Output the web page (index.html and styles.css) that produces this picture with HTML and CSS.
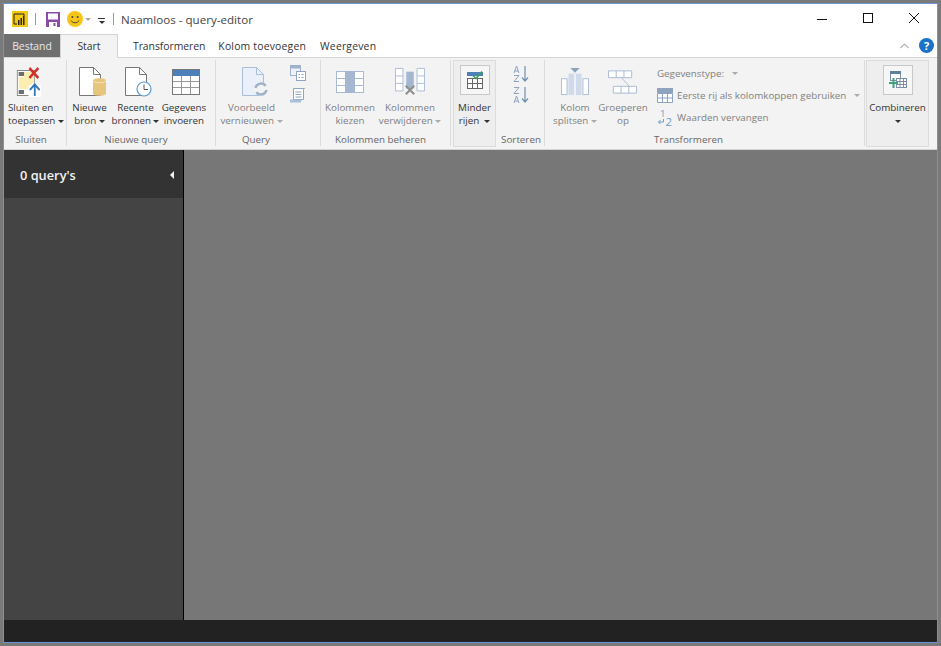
FILE: index.html
```html
<!DOCTYPE html>
<html lang="en">
<head>
  <meta charset="UTF-8">
  <title>Naamloos - query-editor</title>
  <link rel="stylesheet" href="styles.css">
</head>
<body>
  <div class="window">
    <div class="titlebar">
      <svg class="app-logo" width="16" height="16" viewBox="0 0 16 16">
        <rect width="16" height="16" fill="#f2c811"/>
        <path d="M2 3h10v2M2 3v10h3" fill="none" stroke="#222" stroke-width="1"/>
        <rect x="6" y="9" width="1.5" height="5" fill="#222"/>
        <rect x="8.5" y="7" width="1.5" height="7" fill="#222"/>
        <rect x="11" y="5" width="1.5" height="9" fill="#222"/>
      </svg>
      <span class="qat-sep"></span>
      <svg class="qat-save" width="14" height="15" viewBox="0 0 14 15">
        <rect width="14" height="15" fill="#8b4aa5"/>
        <rect x="2" y="1.500" width="10" height="6" fill="#fff"/>
        <rect x="3" y="10" width="8" height="5" fill="#fff"/>
        <rect x="7.500" y="11" width="2" height="3" fill="#8b4aa5"/>
      </svg>
      <svg class="qat-smile" width="16" height="16" viewBox="0 0 16 16">
        <circle cx="8" cy="8" r="8" fill="#f5c518"/>
        <circle cx="5.400" cy="6" r="1" fill="#444"/>
        <circle cx="10.600" cy="6" r="1" fill="#444"/>
        <path d="M4 9.500c1.500 3 6.500 3 8 0" fill="none" stroke="#444"/>
      </svg>
      <span class="caret caret-grey qat-caret"></span>
      <span class="qat-more"><span class="qat-more-line"></span><span class="caret caret-dark"></span></span>
      <span class="qat-sep qat-sep-last"></span>
      <span class="title">Naamloos - query-editor</span>
      <div class="win-controls">
        <svg width="46" height="30" viewBox="0 0 46 30"><path d="M18 15.500h10" stroke="#111"/></svg>
        <svg width="46" height="30" viewBox="0 0 46 30"><rect x="18.500" y="9.500" width="9" height="9" fill="none" stroke="#111"/></svg>
        <svg width="46" height="30" viewBox="0 0 46 30"><path d="M18 9l10 10M28 9l-10 10" stroke="#111" fill="none"/></svg>
      </div>
    </div>

    <div class="tabs">
      <span class="tab tab-file">Bestand</span>
      <span class="tab tab-active">Start</span>
      <span class="tab tab-narrow">Transformeren</span>
      <span class="tab tab-wide">Kolom toevoegen</span>
      <span class="tab tab-wide">Weergeven</span>
      <div class="tabs-right">
        <svg width="9" height="6" viewBox="0 0 9 6"><path d="M.5 5L4.500 1l4 4" fill="none" stroke="#b5b5b5" stroke-width="1.200"/></svg>
        <span class="help">?</span>
      </div>
    </div>

    <div class="ribbon">
      <section class="group group-close">
        <div class="group-body">
          <button class="big w-sluiten">
            <svg class="icon icon-sluiten" width="25" height="30" viewBox="0 0 28 30" preserveAspectRatio="none">
              <rect x="1.500" y="3.500" width="19" height="25" fill="#fff" stroke="#888"/>
              <path d="M9 5h11v9l-6 8H9z" fill="#fbeeb0"/>
              <rect x="3" y="5" width="6" height="4" fill="#6e6e6e"/>
              <rect x="3" y="10" width="6" height="12" fill="#fbeeb0"/>
              <rect x="3" y="23" width="6" height="4" fill="#6e6e6e"/>
              <path d="M15 1l10 10M25 1L15 11" stroke="#d0312d" stroke-width="2.600"/>
              <rect x="14" y="18" width="14" height="12" fill="#fff"/>
              <path d="M21 29V18M15.500 23l5.500-5.500 5.500 5.500" fill="none" stroke="#2f77b8" stroke-width="2"/>
            </svg>
            <span class="lbl lbl-left">Sluiten en<br>toepassen <span class="caret caret-dark"></span></span>
          </button>
        </div>
        <div class="group-label">Sluiten</div>
      </section>

      <section class="group group-new">
        <div class="group-body">
          <button class="big w-nieuwe">
            <svg class="icon" width="28" height="30" viewBox="0 0 28 30">
              <path d="M1.500.5h14l7 7v21h-21z" fill="#fff" stroke="#777"/>
              <path d="M15.500.5v7h7" fill="none" stroke="#777"/>
              <path d="M15 13.500c0-3 13-3 13 0v13c0 3-13 3-13 0z" fill="#e8c57c"/>
              <path d="M15 13.500c0 3 13 3 13 0" fill="none" stroke="#f6e6c0"/>
            </svg>
            <span class="lbl">Nieuwe<br>bron <span class="caret caret-dark"></span></span>
          </button>
          <button class="big w-recente">
            <svg class="icon" width="28" height="30" viewBox="0 0 28 30">
              <path d="M1.500.5h14l7 7v21h-21z" fill="#fff" stroke="#777"/>
              <path d="M15.500.5v7h7" fill="none" stroke="#777"/>
              <circle cx="20" cy="22" r="7" fill="#fff" stroke="#5c9bd1" stroke-width="1.200"/>
              <path d="M20 17.500V22.500h4" fill="none" stroke="#555"/>
            </svg>
            <span class="lbl">Recente<br>bronnen <span class="caret caret-dark"></span></span>
          </button>
          <button class="big w-gegevens">
            <svg class="icon" width="28" height="26" viewBox="0 0 28 26">
              <rect x=".5" y=".5" width="27" height="25" fill="#fff" stroke="#777"/>
              <rect x="1" y="1" width="26" height="6" fill="#4d7fb8"/>
              <path d="M1 12.500h26M1 18.500h26M9.500 7v18M18.500 7v18" stroke="#999"/>
            </svg>
            <span class="lbl">Gegevens<br>invoeren</span>
          </button>
        </div>
        <div class="group-label">Nieuwe query</div>
      </section>

      <section class="group group-query">
        <div class="group-body">
          <button class="big w-voorbeeld muted">
            <svg class="icon" width="28" height="30" viewBox="0 0 28 30">
              <path d="M1.500.5h14l7 7v21h-21z" fill="#e9f0fa" stroke="#a9bedb"/>
              <path d="M15.500.5v7h7" fill="none" stroke="#a9bedb"/>
              <circle cx="20" cy="22" r="7" fill="#f3f3f3"/>
              <path d="M14.500 21c1-5 8-6 10-2M25.500 23c-1 5-8 6-10 2" fill="none" stroke="#9fb2c8" stroke-width="2.400"/>
            </svg>
            <span class="lbl">Voorbeeld<br>vernieuwen <span class="caret caret-grey"></span></span>
          </button>
          <div class="stack-icons">
            <svg width="16" height="16" viewBox="0 0 16 16">
              <rect x=".5" y=".5" width="10" height="10" fill="#eef2f8" stroke="#9fb2cc"/>
              <rect x="1" y="1" width="9" height="2.500" fill="#9fb2cc"/>
              <rect x="6.500" y="6.500" width="9" height="9" fill="#fff" stroke="#8ea4c2"/>
              <path d="M8.500 9.500h1.500M11.500 9.500h2M8.500 12.500h1.500M11.500 12.500h2" stroke="#8ea4c2"/>
            </svg>
            <svg width="16" height="16" viewBox="0 0 16 16">
              <path d="M3.500 1.500h11l-1 1v10h-10z" fill="#fff" stroke="#8ea4c2"/>
              <path d="M.5 15.500h10c1 0 1-3 0-3H.5c-1 0-1 3 0 3z" fill="#a9bedb"/>
              <path d="M5.500 5h6M5.500 7.500h6M5.500 10h6" stroke="#8ea4c2"/>
            </svg>
          </div>
        </div>
        <div class="group-label">Query</div>
      </section>

      <section class="group group-cols">
        <div class="group-body">
          <button class="big w-kiezen muted">
            <svg class="icon" width="28" height="22" viewBox="0 0 28 22">
              <rect x=".5" y=".5" width="27" height="21" fill="#fff" stroke="#a9bbd4"/>
              <rect x="9" y="0" width="10" height="22" fill="#a4b6d0"/>
              <path d="M0 7.500h9M0 14.500h9M19 7.500h9M19 14.500h9" stroke="#a9bbd4"/>
            </svg>
            <span class="lbl">Kolommen<br>kiezen</span>
          </button>
          <button class="big w-verwijderen muted">
            <svg class="icon" width="30" height="30" viewBox="0 0 32 30">
              <path d="M.5.500h8v24h-8zM.5 8.500h8M.5 16.500h8M23.500.500h8v24h-8zM23.500 8.500h8M23.500 16.500h8" fill="#fff" stroke="#a9bbd4"/>
              <rect x="12" y="4" width="8" height="18" fill="#a4b6d0"/>
              <path d="M11.500 19l9 9M20.500 19l-9 9" stroke="#8d8d8d" stroke-width="2.200"/>
            </svg>
            <span class="lbl">Kolommen<br>verwijderen <span class="caret caret-grey"></span></span>
          </button>
        </div>
        <div class="group-label">Kolommen beheren</div>
      </section>

      <section class="group group-rows">
        <button class="big boxed w-minder">
          <span class="icon-box">
            <svg width="16" height="18" viewBox="0 0 16 18">
              <rect x="0" y="1" width="16" height="4" fill="#4d7fb8"/>
              <rect x=".5" y="7.500" width="15" height="10" fill="#fff" stroke="#666"/>
              <path d="M0 12.500h16M5.500 7.500v10M10.500 7.500v10" stroke="#666"/>
              <path d="M6 4.500l3 3 6-7" fill="none" stroke="#43a05a" stroke-width="1.600"/>
            </svg>
          </span>
          <span class="lbl">Minder<br>rijen &nbsp;<span class="caret caret-dark"></span></span>
        </button>
      </section>

      <section class="group group-sort">
        <div class="group-body sort-icons">
          <svg width="16" height="18" viewBox="0 0 16 18">
            <path d="M1 8l2.500-7L6 8M1.800 6h3.400M1 10.500h5L1 16.500h5" fill="none" stroke="#8da3bf"/>
            <path d="M12 1v15M9 12.500l3 3.500 3-3.500" fill="none" stroke="#6f8fb5" stroke-width="1.200"/>
          </svg>
          <svg width="16" height="18" viewBox="0 0 16 18">
            <path d="M1 1.500h5L1 7.500h5M1 17l2.500-7L6 17M1.800 15h3.400" fill="none" stroke="#8da3bf"/>
            <path d="M12 1v15M9 12.500l3 3.500 3-3.500" fill="none" stroke="#6f8fb5" stroke-width="1.200"/>
          </svg>
        </div>
        <div class="group-label">Sorteren</div>
      </section>

      <section class="group group-transform">
        <div class="group-body">
          <button class="big w-kolom muted">
            <svg class="icon" width="28" height="30" viewBox="0 0 30 30">
              <path d="M10 0h10l-5 5z" fill="#8da3bf"/>
              <rect x=".5" y="11.500" width="6" height="17" fill="#fff" stroke="#a9bbd4"/>
              <rect x="8" y="6" width="14" height="23" fill="#cfdbea"/>
              <rect x="14" y="6" width="2" height="23" fill="#f3f3f3"/>
              <rect x="23.500" y="11.500" width="6" height="17" fill="#fff" stroke="#a9bbd4"/>
            </svg>
            <span class="lbl">Kolom<br>splitsen <span class="caret caret-grey"></span></span>
          </button>
          <button class="big w-groeperen muted">
            <svg class="icon" width="29" height="22" viewBox="0 0 30 24">
              <path d="M.5.500h24v7H.5zM8.500.500v7M16.500.500v7M5.500 16.500h24v7h-24zM13.500 16.500v7M21.500 16.500v7" fill="#fff" stroke="#a9bbd4"/>
              <path d="M14 7.500l8 9" stroke="#a9bbd4" fill="none"/>
            </svg>
            <span class="lbl">Groeperen<br>op</span>
          </button>
          <div class="small-list">
            <div class="small-item">Gegevenstype: <span class="caret caret-grey caret-gap"></span></div>
            <div class="small-item">
              <svg width="16" height="15" viewBox="0 0 16 15">
                <rect width="16" height="5" fill="#8da3bf"/>
                <path d="M.5 5.500h15v9H.5zM.5 10h15M5.500 5.500v9M10.500 5.500v9" fill="#fff" stroke="#8da3bf"/>
              </svg>
              Eerste rij als kolomkoppen gebruiken <span class="caret caret-grey caret-gap"></span>
            </div>
            <div class="small-item">
              <svg class="num-icon" width="16" height="30" viewBox="0 -6 16 30">
                <text x="3" y="9" class="num-small">1</text>
                <text x="8.500" y="17.500" class="num-big">2</text>
                <path d="M6.500 11v3H1.500M3.500 12l-2 2 2 2" fill="none" stroke="#6f9ccc"/>
              </svg>
              Waarden vervangen
            </div>
          </div>
        </div>
        <div class="group-label">Transformeren</div>
      </section>

      <section class="group group-combine">
        <button class="big boxed w-combine">
          <span class="icon-box">
            <svg width="18" height="18" viewBox="0 0 18 18">
              <rect x="1.500" y=".5" width="10" height="9" fill="#fff" stroke="#7d8fa5"/>
              <rect x="1" y="0" width="11" height="3" fill="#5f7f9f"/>
              <rect x="7.500" y="7.500" width="10" height="9" fill="#fff" stroke="#7d8fa5"/>
              <path d="M8 10.500h10M8 13.500h10M11 8v8M14.500 8v8" stroke="#7d8fa5"/>
              <path d="M4.500 7v10M0 12h9" stroke="#3fa37a" stroke-width="2"/>
            </svg>
          </span>
          <span class="lbl">Combineren<br><span class="caret caret-dark"></span></span>
        </button>
      </section>
    </div>

    <div class="content">
      <aside class="nav">
        <div class="nav-head">
          <span>0 query's</span>
          <span class="nav-arrow"></span>
        </div>
      </aside>
      <main class="main"></main>
    </div>
    <div class="statusbar"></div>
  </div>
</body>
</html>
```

FILE: styles.css
```css
* {
  box-sizing: border-box;
}
html, body {
  margin: 0;
  height: 100%;
}
body {
  background-color: #7a7a7a;
  padding: 3px;
  font-family: "Open Sans", "Noto Sans", sans-serif;
  font-size: 11px;
  color: #333;
  overflow: hidden;
}
.window {
  width: 935px;
  height: 640px;
  border: 1px solid #6b93d6;
  background-color: #fff;
  display: flex;
  flex-direction: column;
}

/* title bar */
.titlebar {
  height: 30px;
  display: flex;
  align-items: center;
  padding-left: 8px;
  flex-shrink: 0;
}
.qat-sep {
  width: 1px;
  height: 12px;
  background-color: #999;
  margin: 0 10px 0 7px;
}
.qat-save {
  margin-right: 7px;
}
.qat-caret {
  margin-left: 2px;
}
.qat-more {
  display: flex;
  flex-direction: column;
  align-items: center;
  gap: 2px;
  margin-left: 7px;
  margin-top: 3px;
}
.qat-more-line {
  width: 7px;
  height: 1px;
  background-color: #333;
}
.qat-sep-last {
  margin: 0 7px 0 8px;
}
.title {
  font-size: 11.6px;
  color: #444;
}
.win-controls {
  margin-left: auto;
  display: flex;
}

/* tabs */
.tabs {
  height: 24px;
  display: flex;
  align-items: stretch;
  flex-shrink: 0;
  border-bottom: 1px solid #d4d4d4;
  font-size: 10.4px;
}
.tab {
  padding: 0 7px;
  line-height: 24px;
  color: #333;
  white-space: nowrap;
}
.tab-narrow {
  letter-spacing: -.05px;
  padding-right: 6px;
}
.tab-wide {
  letter-spacing: .2px;
}
.tab-file {
  width: 56px;
  padding: 0;
  text-align: center;
  background-color: #6f6f6f;
  color: #e8e8e8;
  height: 23px;
  line-height: 25px;
}
.tab-active {
  width: 58px;
  height: 24px;
  padding: 0;
  margin-right: 8px;
  text-align: center;
  background-color: #f3f3f3;
  border: 1px solid #d4d4d4;
  border-bottom: none;
  position: relative;
  z-index: 1;
  line-height: 23px;
}
.tabs-right {
  margin-left: auto;
  display: flex;
  align-items: center;
  gap: 10px;
  padding-right: 3px;
}
.help {
  width: 15px;
  height: 15px;
  border-radius: 50%;
  background-color: #1a73c8;
  color: #fff;
  font-size: 11px;
  font-weight: 700;
  line-height: 15px;
  text-align: center;
}

/* ribbon */
.ribbon {
  height: 92px;
  display: flex;
  background-color: #f3f3f3;
  flex-shrink: 0;
  border-bottom: 1px solid #d4d4d4;
  padding-top: 2px;
}
.group {
  display: flex;
  flex-direction: column;
  flex-shrink: 0;
  border-right: 1px solid #dcdcdc;
  margin-bottom: 3px;
}
.group-body {
  flex: 1;
  display: flex;
  min-height: 0;
}
.group-label {
  height: 16px;
  line-height: 20px;
  text-align: center;
  font-size: 9.8px;
  color: #666;
}
.group-close { width: 63px; }
.group-close .group-label { padding-right: 8px; }
.group-new { width: 149px; }
.group-new .group-label { padding-right: 10px; }
.group-query { width: 105px; }
.group-query .group-label { padding-right: 24px; }
.group-cols { width: 130px; }
.group-cols .group-label { padding-right: 10px; }
.group-rows { width: 47px; padding: 0 2px; }
.group-sort { width: 47px; }
.group-transform { width: 320px; }
.group-transform .group-label { padding-right: 32px; }
.group-combine { width: 65px; padding: 0 1px; }

.big {
  font: inherit;
  font-size: 9.8px;
  color: #333;
  background: none;
  border: none;
  padding: 7px 0 0;
  height: 72px;
  display: flex;
  flex-direction: column;
  align-items: center;
  flex-shrink: 0;
}
.big .icon {
  height: 30px;
  flex-shrink: 0;
  margin-bottom: 4px;
}
.big .icon-sluiten {
  margin-right: 5px;
}
.lbl {
  display: block;
  line-height: 13px;
  text-align: center;
  white-space: nowrap;
}
.lbl-left {
  align-self: flex-start;
  text-align: left;
  padding-left: 4px;
}
.muted {
  color: #808080;
}
.w-sluiten { width: 54px; }
.w-nieuwe { width: 45px; }
.w-nieuwe .icon { margin-left: 5px; }
.w-recente { width: 47px; }
.w-recente .icon { margin-left: 4px; }
.w-gegevens { width: 50px; }
.w-gegevens .icon { margin-left: 3px; }
.w-voorbeeld { width: 71px; }
.w-voorbeeld .icon { margin-left: 7px; }
.w-kiezen { width: 58px; }
.w-verwijderen { width: 62px; }
.w-kolom { width: 50px; margin-left: 5px; }
.w-groeperen { width: 46px; }
.w-groeperen .icon { margin-left: -2px; }

.stack-icons {
  display: flex;
  flex-direction: column;
  gap: 6px;
  padding: 5px 0 0 3px;
}
.sort-icons {
  flex-direction: column;
  align-items: center;
  gap: 3px;
  padding-top: 5px;
}

.boxed {
  height: 87px;
  width: 100%;
  padding: 4px 0 0;
  background-color: #eeeeee;
  border: 1px solid #dcdcdc;
}
.group-rows,
.group-combine {
  border-right: none;
  margin-bottom: 0;
}
.icon-box {
  width: 30px;
  height: 30px;
  border: 1px solid #c8c8c8;
  background-color: #f6f6f6;
  display: flex;
  align-items: center;
  justify-content: center;
  margin-bottom: 6px;
  flex-shrink: 0;
}

.small-list {
  display: flex;
  flex-direction: column;
  padding: 2px 0 0 11px;
  color: #808080;
  font-size: 9.8px;
}
.small-item {
  height: 22px;
  display: flex;
  align-items: center;
  gap: 4px;
  white-space: nowrap;
}
.num-icon {
  margin: -6px 0;
}
.num-small {
  font-size: 9.5px;
  fill: #6f9ccc;
}
.num-big {
  font-size: 11.5px;
  fill: #6f9ccc;
}

.caret {
  display: inline-block;
  vertical-align: middle;
  width: 0;
  height: 0;
  border-left: 3px solid transparent;
  border-right: 3px solid transparent;
  border-top: 3px solid #333;
}
.caret-grey {
  border-top-color: #aaa;
}
.caret-gap {
  margin-left: 4px;
}

/* body */
.content {
  flex: 1;
  display: flex;
  min-height: 0;
}
.nav {
  width: 180px;
  background-color: #444;
  border-right: 1px solid #000;
}
.nav-head {
  height: 48px;
  padding: 2px 9px 0 16px;
  background-color: #333;
  color: #f2f2f2;
  font-size: 12.8px;
  font-weight: 600;
  display: flex;
  align-items: center;
  justify-content: space-between;
}
.nav-arrow {
  width: 0;
  height: 0;
  border-top: 4px solid transparent;
  border-bottom: 4px solid transparent;
  border-right: 4px solid #f2f2f2;
}
.main {
  flex: 1;
  background-color: #777;
}
.statusbar {
  height: 22px;
  background-color: #222;
  flex-shrink: 0;
}
```
